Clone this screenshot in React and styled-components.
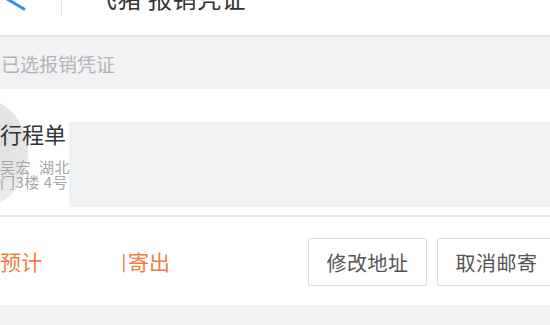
import React from 'react'
import styled, { createGlobalStyle } from 'styled-components'

const GlobalStyle = createGlobalStyle`
  body {
    margin: 0;
    background: #ffffff;
    font-family: "Noto Sans CJK SC", "Noto Sans", sans-serif;
  }
`

const Page = styled.div`
  width: 550px;
  height: 325px;
  overflow: hidden;
  background: #f1f2f4;
`

const Header = styled.div`
  height: 35px;
  display: flex;
  align-items: flex-start;
  background: #ffffff;
  border-bottom: 2px solid #e7e8ea;
  overflow: hidden;
`

const BackIcon = styled.svg`
  width: 30px;
  height: 14px;
  flex: none;
  margin-left: 2px;
`

const HeaderDivider = styled.div`
  width: 1px;
  height: 15px;
  background: #e2e2e2;
  margin-left: 29px;
`

const Title = styled.div`
  font-size: 24px;
  line-height: 24px;
  color: #333333;
  margin-top: -14px;
  margin-left: 31px;
  letter-spacing: 0.5px;
`

const SectionLabel = styled.div`
  height: 52px;
  display: flex;
  align-items: center;
  padding-left: 1px;
  font-size: 19px;
  color: #b3b5b9;
  background: #f1f2f4;
`

const Card = styled.div`
  position: relative;
  background: #ffffff;
  overflow: hidden;
`

const Notch = styled.div`
  position: absolute;
  left: -72px;
  top: 8px;
  width: 100px;
  height: 112px;
  border-radius: 50%;
  background: radial-gradient(circle at 70% 35%, #d6d6d6 0%, #e6e6e6 55%, #f2f2f2 100%);
  opacity: 0.8;
`

const TripRow = styled.div`
  position: relative;
  display: flex;
  padding-top: 31px;
  padding-bottom: 8px;
`

const TripText = styled.div`
  width: 69px;
  flex: none;
  overflow: hidden;
  white-space: nowrap;
`

const TripTitle = styled.div`
  font-size: 22px;
  line-height: 26px;
  color: #333333;
`

const TripLine = styled.div`
  font-size: 15px;
  line-height: 15px;
  color: #a6a6a6;
  margin-top: ${(p) => p.$gap || 0}px;
  letter-spacing: 0.5px;
`

const Redacted = styled.div`
  flex: 1;
  height: 85px;
  margin-top: 2px;
  background: #f0f1f3;
`

const Divider = styled.div`
  height: 2px;
  background: #e4e5e7;
`

const ActionRow = styled.div`
  height: 88px;
  display: flex;
  align-items: center;
`

const Notice = styled.div`
  display: flex;
  align-items: center;
  font-size: 21px;
  color: #f47d3e;
  white-space: nowrap;
`

const Blank = styled.span`
  display: inline-block;
  width: 81px;
`

const Clip = styled.span`
  display: inline-block;
  width: 5px;
  overflow: hidden;
  & > span {
    display: inline-block;
    margin-left: -16px;
  }
`

const Buttons = styled.div`
  display: flex;
  gap: 10px;
  margin-left: auto;
  margin-right: -6px;
  margin-top: 2px;
`

const Button = styled.button`
  width: 119px;
  height: 48px;
  padding: 0;
  background: #ffffff;
  border: 1px solid #dcdcdc;
  border-radius: 2px;
  font-family: inherit;
  font-size: 20px;
  color: #555555;
  letter-spacing: 0.5px;
`

const Footer = styled.div`
  height: 20px;
  background: #f1f2f4;
`

export default function App() {
  return (
    <Page>
      <GlobalStyle />
      <Header>
        <BackIcon viewBox="0 0 30 14">
          <polyline
            points="18,-12 5,-1 22,9"
            fill="none"
            stroke="#3a8ee6"
            strokeWidth="3"
            strokeLinecap="round"
            strokeLinejoin="round"
          />
        </BackIcon>
        <HeaderDivider />
        <Title>飞猪 报销凭证</Title>
      </Header>
      <SectionLabel>已选报销凭证</SectionLabel>
      <Card>
        <Notch />
        <TripRow>
          <TripText>
            <TripTitle>行程单</TripTitle>
            <TripLine $gap={13}>吴宏{'\u2002'}湖北省武汉市</TripLine>
            <TripLine>门3楼 4号</TripLine>
          </TripText>
          <Redacted />
        </TripRow>
        <Divider />
        <ActionRow>
          <Notice>
            预计
            <Blank />
            <Clip>
              <span>日</span>
            </Clip>
            寄出
          </Notice>
          <Buttons>
            <Button>修改地址</Button>
            <Button>取消邮寄</Button>
          </Buttons>
        </ActionRow>
      </Card>
      <Footer />
    </Page>
  )
}
